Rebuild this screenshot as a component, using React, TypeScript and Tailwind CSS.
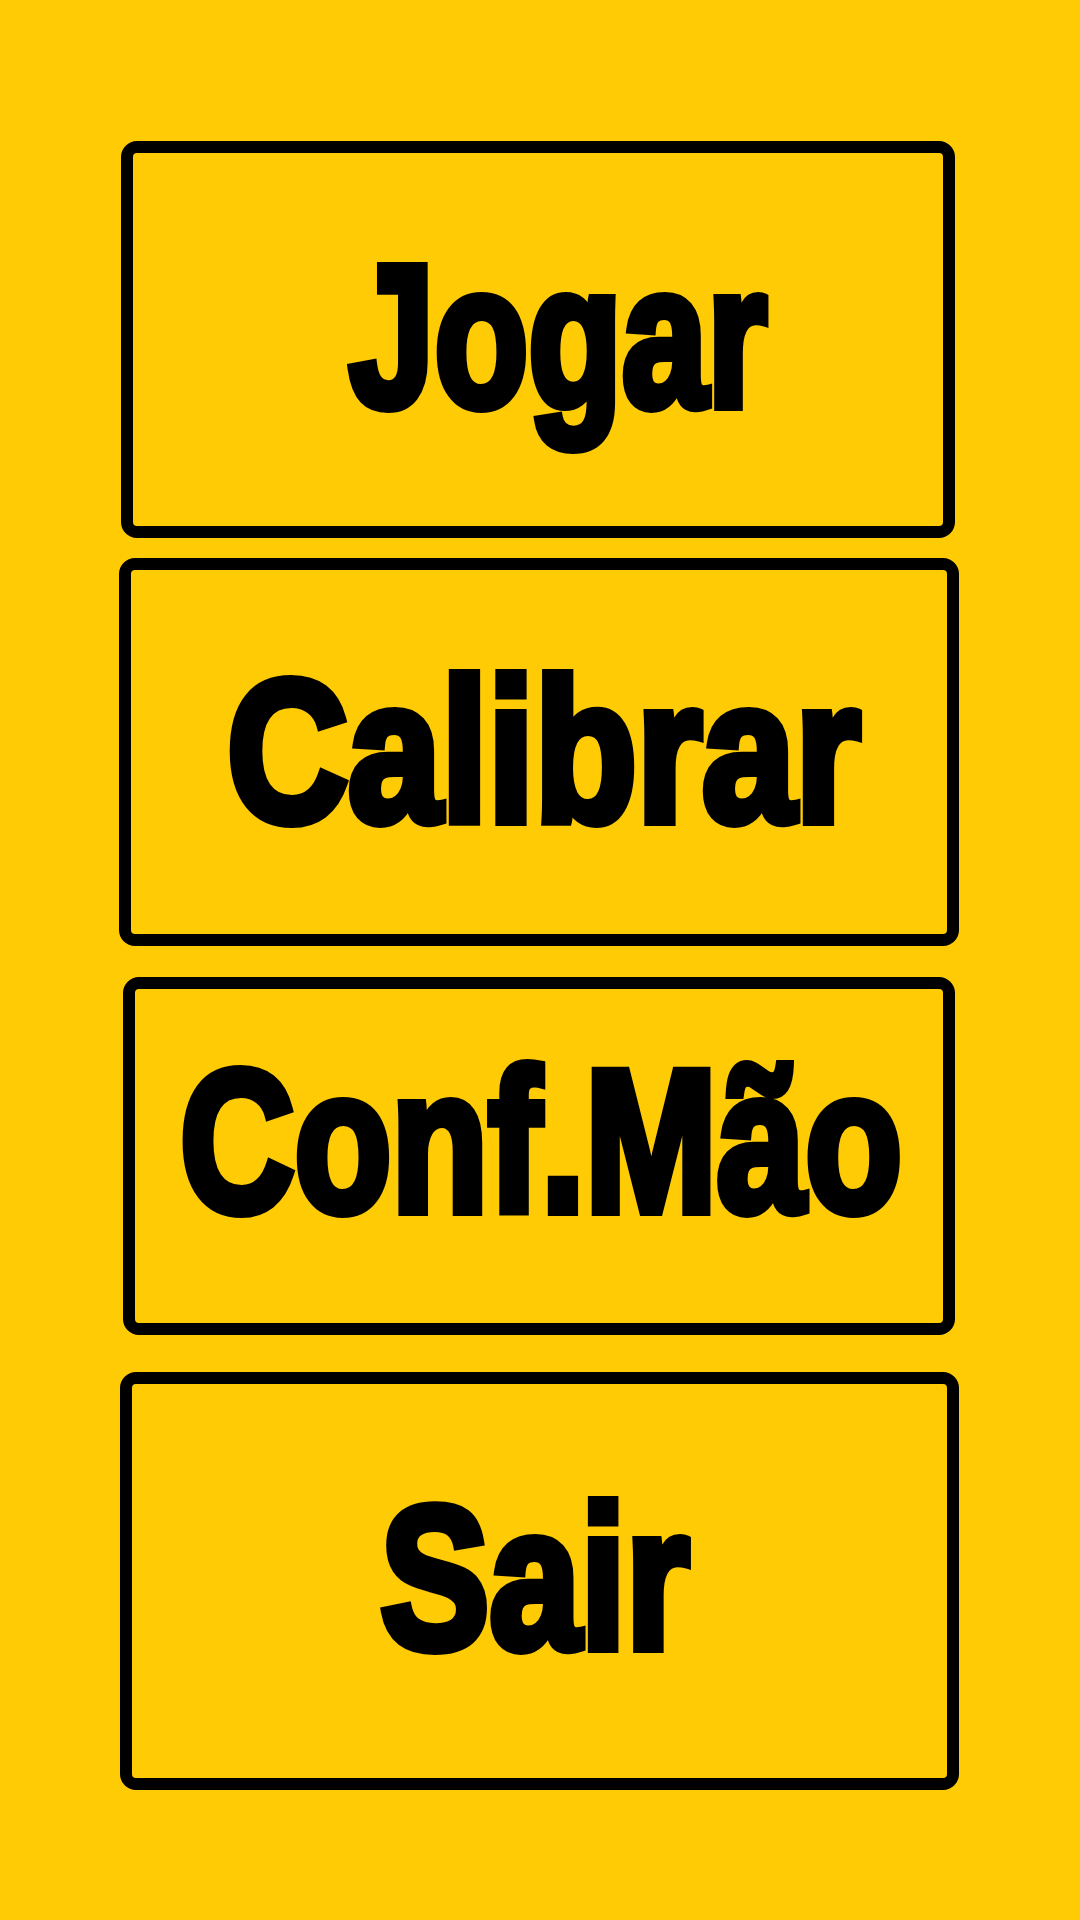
import React from 'react';

type Item = {
  label: string;
  box: string;
  shift: string;
  scale: string;
};

const items: Item[] = [
  { label: 'Jogar', box: 'ml-[121px] w-[834px] h-[397px]', shift: 'translate-x-[20px] -translate-y-[4px]', scale: 'scale-x-[0.76]' },
  { label: 'Calibrar', box: 'mt-[20px] ml-[119px] w-[840px] h-[388px]', shift: 'translate-x-[5px] -translate-y-[1px]', scale: 'scale-x-[0.83]' },
  { label: 'Conf.Mão', box: 'mt-[31px] ml-[123px] w-[832px] h-[358px]', shift: 'translate-x-[2px] -translate-y-[15px]', scale: 'scale-x-[0.785]' },
  { label: 'Sair', box: 'mt-[37px] ml-[120px] w-[839px] h-[418px]', shift: '-translate-x-[5px] -translate-y-[3px]', scale: 'scale-x-[0.81]' },
];

const MenuButton: React.FC<{ item: Item }> = ({ item }) => (
  <button
    className={`${item.box} flex items-center justify-center rounded-[16px] border-[12px] border-black bg-[#ffcb05]`}
  >
    <span className={`${item.shift} inline-block`}>
      <span
        className={`${item.scale} inline-block font-['Liberation_Sans',Arial,sans-serif] text-[202px] font-bold leading-none text-black [-webkit-text-stroke:10px_black]`}
      >
        {item.label}
      </span>
    </span>
  </button>
);

export default function App() {
  return (
    <div className="flex min-h-[1920px] w-[1080px] flex-col bg-[#ffcb05] pt-[141px]">
      {items.map((item) => (
        <MenuButton key={item.label} item={item} />
      ))}
    </div>
  );
}
